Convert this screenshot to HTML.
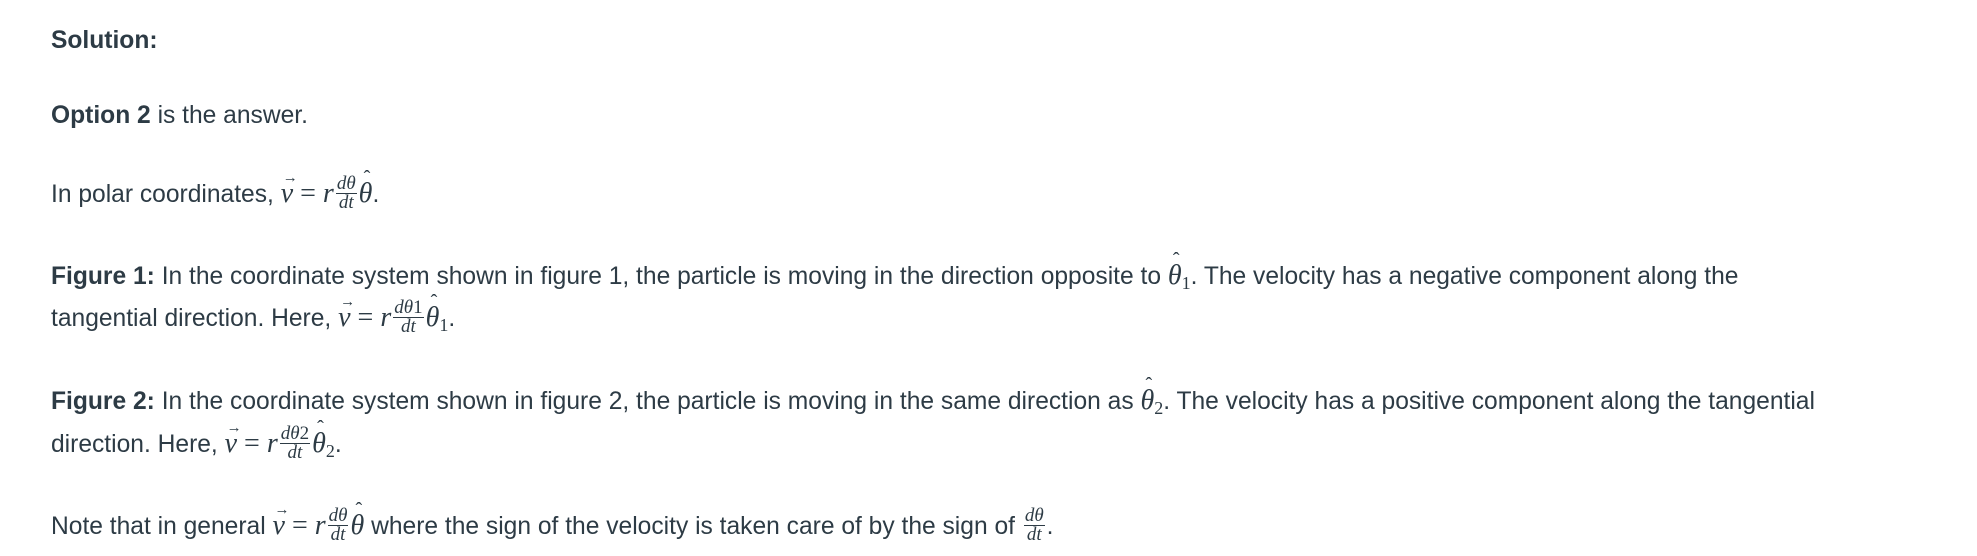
<!DOCTYPE html>
<html><head><meta charset="utf-8"><style>
html,body{margin:0;padding:0;background:#fff;width:1977px;height:556px;overflow:hidden}
body{font-family:"Liberation Sans",sans-serif;font-size:24.6px;color:#2d3b45;position:relative}
.l{position:absolute;left:51px;white-space:nowrap;line-height:25px}
b{font-weight:bold}
.m{font-family:"Liberation Serif",serif;font-style:italic;font-size:28px}
.u{font-family:"Liberation Serif",serif;font-size:28px;font-style:normal}
.fr{display:inline-block;vertical-align:middle;text-align:center;font-family:"Liberation Serif",serif;font-style:italic;font-size:19px;line-height:18px;margin:0 2px;position:relative;top:-2px}
.fr .n{display:block;border-bottom:1px solid #2d3b45;padding:0 1px}
.fr .d{display:block}
.vec{position:relative;display:inline-block}
.vec:before{content:"\2192";position:absolute;left:2px;top:-15px;font-size:15px;font-style:normal}
.hat{position:relative;display:inline-block}
.hat:before{content:"\02C6";position:absolute;left:5px;top:-15px;font-size:20px;font-style:normal}
sub{font-size:18px;font-style:normal;vertical-align:-5px;line-height:0}
</style></head><body>
<div class="l" style="top:28px"><b>Solution:</b></div>
<div class="l" style="top:103px"><b>Option 2</b> is the answer.</div>
<div class="l" style="top:177px">In polar coordinates, <span class="m"><span class="vec">v</span> <span class="u">=</span> r</span><span class="fr"><span class="n">dθ</span><span class="d">dt</span></span><span class="m"><span class="hat">θ</span></span>.</div>
<div class="l" style="top:263px"><b>Figure 1:</b> In the coordinate system shown in figure 1, the particle is moving in the direction opposite to <span class="m"><span class="hat">θ</span><sub>1</sub></span>. The velocity has a negative component along the</div>
<div class="l" style="top:301px">tangential direction. Here, <span class="m"><span class="vec">v</span> <span class="u">=</span> r</span><span class="fr"><span class="n">dθ<sub style="vertical-align:0;font-size:19px">1</sub></span><span class="d">dt</span></span><span class="m"><span class="hat">θ</span><sub>1</sub></span>.</div>
<div class="l" style="top:388px"><b>Figure 2:</b> In the coordinate system shown in figure 2, the particle is moving in the same direction as <span class="m"><span class="hat">θ</span><sub>2</sub></span>. The velocity has a positive component along the tangential</div>
<div class="l" style="top:427px">direction. Here, <span class="m"><span class="vec">v</span> <span class="u">=</span> r</span><span class="fr"><span class="n">dθ<sub style="vertical-align:0;font-size:19px">2</sub></span><span class="d">dt</span></span><span class="m"><span class="hat">θ</span><sub>2</sub></span>.</div>
<div class="l" style="top:509px">Note that in general <span class="m"><span class="vec">v</span> <span class="u">=</span> r</span><span class="fr"><span class="n">dθ</span><span class="d">dt</span></span><span class="m"><span class="hat">θ</span></span> where the sign of the velocity is taken care of by the sign of <span class="fr"><span class="n">dθ</span><span class="d">dt</span></span>.</div>
</body></html>
